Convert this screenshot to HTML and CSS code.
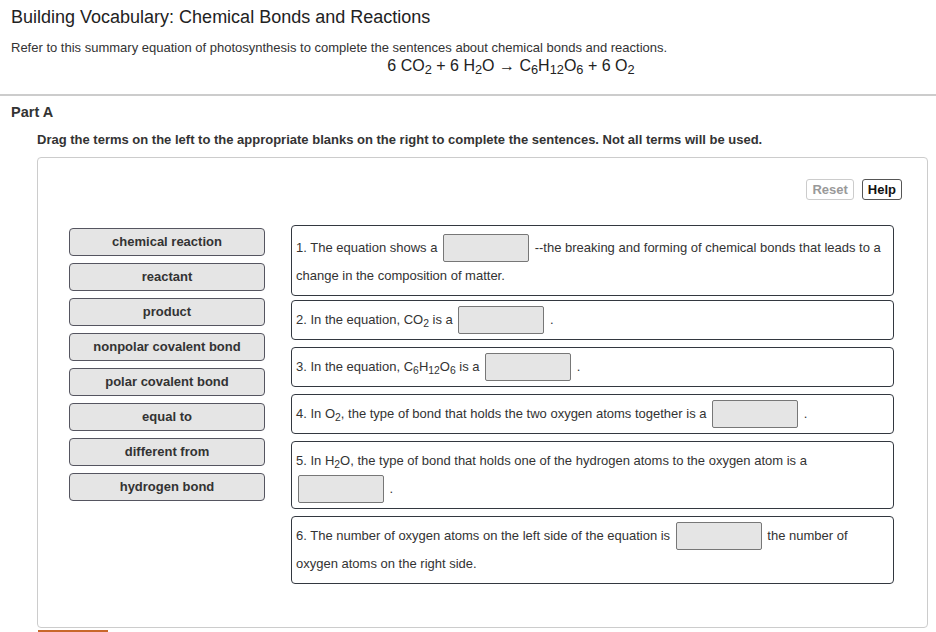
FILE: index.html
```html
<!DOCTYPE html>
<html lang="en">
<head>
    <meta charset="UTF-8">
    <meta name="viewport" content="width=device-width, initial-scale=1.0">
    <title>Building Vocabulary: Chemical Bonds and Reactions</title>
    <link rel="stylesheet" href="styles.css">
</head>
<body>

    <!-- Problem header -->
    <header class="problem-head">
        <h1>Building Vocabulary: Chemical Bonds and Reactions</h1>
        <p class="intro">Refer to this summary equation of photosynthesis to complete the sentences about chemical bonds and reactions.</p>
        <p class="equation">6 CO<sub>2</sub> + 6 H<sub>2</sub>O &rarr; C<sub>6</sub>H<sub>12</sub>O<sub>6</sub> + 6 O<sub>2</sub></p>
    </header>

    <section class="part">
        <h2>Part A</h2>
        <p class="instructions">Drag the terms on the left to the appropriate blanks on the right to complete the sentences. Not all terms will be used.</p>

        <div class="dnd-box">
            <div class="toolbar">
                <button class="tool-btn disabled">Reset</button>
                <button class="tool-btn">Help</button>
            </div>

            <div class="dnd-body">
                <!-- Terms to drag -->
                <ul class="terms">
                    <li class="term">chemical reaction</li>
                    <li class="term">reactant</li>
                    <li class="term">product</li>
                    <li class="term">nonpolar covalent bond</li>
                    <li class="term">polar covalent bond</li>
                    <li class="term">equal to</li>
                    <li class="term">different from</li>
                    <li class="term">hydrogen bond</li>
                </ul>

                <!-- Sentences with blanks -->
                <div class="sentences">
                    <div class="sentence first">1. The equation shows a <span class="blank"></span> --the breaking and forming of chemical bonds that leads to a change in the composition of matter.</div>
                    <div class="sentence">2. In the equation, CO<sub>2</sub> is a <span class="blank"></span> .</div>
                    <div class="sentence">3. In the equation, C<sub>6</sub>H<sub>12</sub>O<sub>6</sub> is a <span class="blank"></span> .</div>
                    <div class="sentence">4. In O<sub>2</sub>, the type of bond that holds the two oxygen atoms together is a <span class="blank"></span> .</div>
                    <div class="sentence">5. In H<sub>2</sub>O, the type of bond that holds one of the hydrogen atoms to the oxygen atom is a <span class="blank"></span> .</div>
                    <div class="sentence">6. The number of oxygen atoms on the left side of the equation is <span class="blank"></span> the number of oxygen atoms on the right side.</div>
                </div>
            </div>
        </div>

        <div class="submit-row">
            <button class="submit-btn">Submit</button>
        </div>
    </section>

</body>
</html>
```

FILE: styles.css
```css
body {
    margin: 0;
    font-family: "Liberation Sans", Arial, sans-serif;
    color: #333;
    background: #fff;
}

.problem-head {
    padding: 0 11px;
    border-bottom: 2px solid #ccc;
    height: 94px;
}

.problem-head h1 {
    margin: 0;
    padding-top: 7px;
    font-size: 18px;
    font-weight: normal;
    color: #222;
}

.intro {
    margin: 12px 0 0;
    font-size: 13px;
}

.equation {
    margin: 2px 0 0;
    padding-left: 86px;
    text-align: center;
    font-size: 16px;
    color: #222;
}

sub {
    font-size: 80%;
    line-height: 0;
    vertical-align: -0.25em;
}

.part h2 {
    margin: 8px 0 0 11px;
    font-size: 14.5px;
}

.instructions {
    margin: 12px 0 0 37px;
    font-size: 13px;
    font-weight: bold;
}

.dnd-box {
    margin: 10px 8px 0 37px;
    height: 448px;
    border: 1px solid #ccc;
    border-radius: 4px;
    padding: 21px 25px 0 31px;
}

.toolbar {
    display: flex;
    justify-content: flex-end;
    gap: 8px;
}

.tool-btn {
    font-family: inherit;
    font-size: 13px;
    font-weight: bold;
    color: #111;
    background: #fff;
    border: 1px solid #555;
    border-radius: 3px;
    height: 21px;
    padding: 0 5px;
}

.tool-btn.disabled {
    color: #999;
    border-color: #ccc;
}

.dnd-body {
    display: flex;
    gap: 26px;
    margin-top: 25px;
}

.terms {
    list-style: none;
    margin: 3px 0 0;
    padding: 0;
    width: 196px;
    display: flex;
    flex-direction: column;
    gap: 7px;
}

.term {
    height: 26px;
    line-height: 26px;
    text-align: center;
    font-size: 13px;
    font-weight: bold;
    background: #e5e5e5;
    border: 1px solid #555560;
    border-radius: 4px;
}

.sentences {
    width: 603px;
    display: flex;
    flex-direction: column;
    gap: 7px;
}

.sentence {
    border: 1px solid #333840;
    border-radius: 4px;
    padding: 5px 4px;
    font-size: 13px;
    line-height: 28px;
}

.sentence.first {
    padding: 8px 4px 5px;
    margin-bottom: -3px;
}

.blank {
    display: inline-block;
    width: 84px;
    height: 26px;
    vertical-align: top;
    background: #e5e5e5;
    border: 1px solid #777;
    border-radius: 2px;
    margin: 0 2px;
}

.submit-row {
    margin: 2px 0 0 38px;
}

.submit-btn {
    width: 70px;
    height: 28px;
    border: none;
    border-top: 2px solid #c8672a;
    background: #d8732f;
    color: #fff;
}
```
